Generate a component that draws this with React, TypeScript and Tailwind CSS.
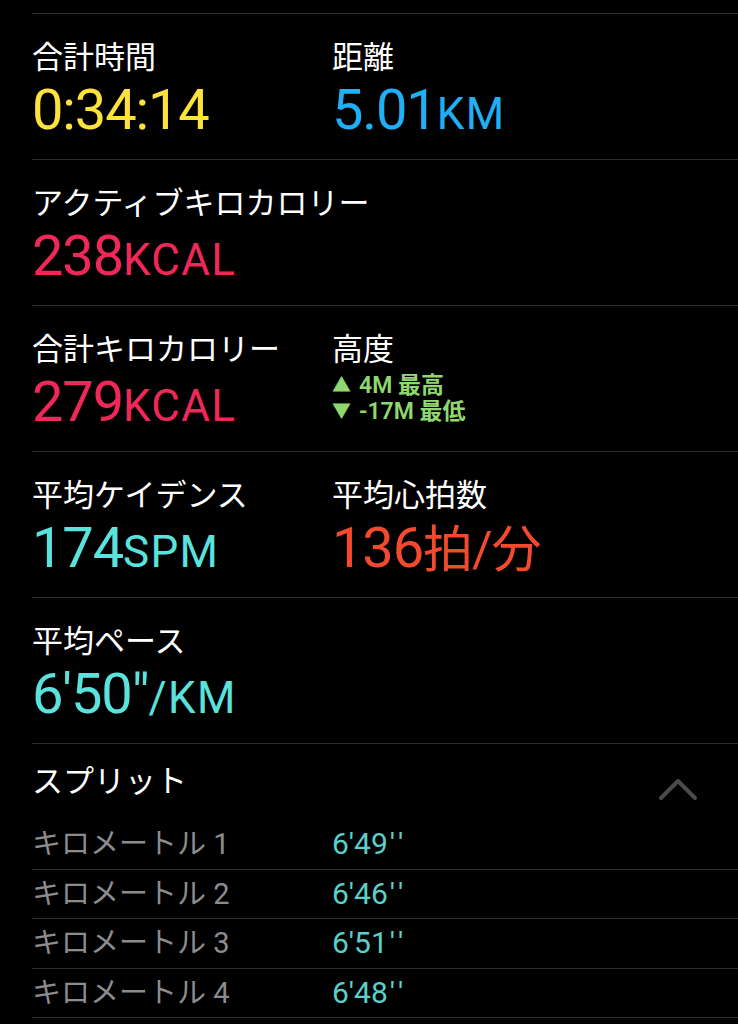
import { ReactNode } from "react"

const FONT = "font-['Roboto','Noto_Sans_CJK_JP',sans-serif]"

type StatProps = {
  label: string
  children: ReactNode
}
const Stat = (props: StatProps) => {
  return (
    <div className="flex flex-col">
      <p className="text-[31px] leading-[36px] text-white">{props.label}</p>
      <div className="mt-[6px]">{props.children}</div>
    </div>
  )
}

type ValueProps = {
  value: string
  unit?: string
  color: string
  unitSize?: string
}
const Value = (props: ValueProps) => {
  return (
    <p className={`flex items-baseline text-[56px] leading-[56px] tracking-[-0.02em] ${props.color}`}>
      <span>{props.value}</span>
      {props.unit && <span className={`${props.unitSize ?? "text-[44px] tracking-[0.03em]"}`}>{props.unit}</span>}
    </p>
  )
}

const Row = (props: { children: ReactNode }) => {
  return (
    <div className="flex h-[146px] border-t border-[#2e2e30] pt-[26px]">{props.children}</div>
  )
}

const splits = [
  { km: 1, pace: "6'49" },
  { km: 2, pace: "6'46" },
  { km: 3, pace: "6'51" },
  { km: 4, pace: "6'48" },
]

export default function App() {
  return (
    <div className={`w-[738px] h-[1024px] overflow-hidden bg-black pt-[13px] pl-[32px] ${FONT}`}>
      <Row>
        <div className="w-[300px]">
          <Stat label="合計時間">
            <Value value="0:34:14" color="text-[#fde23c]" />
          </Stat>
        </div>
        <Stat label="距離">
          <Value value="5.01" unit="KM" color="text-[#1eaff4]" />
        </Stat>
      </Row>
      <Row>
        <Stat label="アクティブキロカロリー">
          <Value value="238" unit="KCAL" color="text-[#f0285a]" />
        </Stat>
      </Row>
      <Row>
        <div className="w-[300px]">
          <Stat label="合計キロカロリー">
            <Value value="279" unit="KCAL" color="text-[#f0285a]" />
          </Stat>
        </div>
        <div className="flex flex-col">
          <p className="text-[31px] leading-[36px] text-white">高度</p>
          <div className="mt-[5px] flex flex-col text-[23px] leading-[26px] font-semibold text-[#8fd870]">
            <p className="flex items-center gap-[8px]"><span className="text-[19px]">▲</span><span>4M 最高</span></p>
            <p className="flex items-center gap-[8px]"><span className="text-[19px]">▼</span><span>-17M 最低</span></p>
          </div>
        </div>
      </Row>
      <Row>
        <div className="w-[300px]">
          <Stat label="平均ケイデンス">
            <Value value="174" unit="SPM" color="text-[#5ae2dc]" />
          </Stat>
        </div>
        <Stat label="平均心拍数">
          <Value value="136" unit="拍/分" unitSize="text-[50px]" color="text-[#f34a2e]" />
        </Stat>
      </Row>
      <Row>
        <Stat label={"平均ペース"}>
          <Value value={"6'50\""} unit="/KM" color="text-[#5ae2dc]" />
        </Stat>
      </Row>
      <div className="border-t border-[#2e2e30]">
        <div className="flex h-[76px] items-center justify-between pr-[40px]">
          <p className="text-[31px] leading-[36px] text-white">スプリット</p>
          <svg width="40" height="24" viewBox="0 0 40 24" className="mt-[14px]">
            <polyline points="3,21 20,4 37,21" fill="none" stroke="#4b4b4d" strokeWidth="4" strokeLinecap="round" strokeLinejoin="round" />
          </svg>
        </div>
        {splits.map((split) => (
          <div key={split.km} className="flex h-[49.5px] items-center border-b border-[#2e2e30] text-[29px] leading-[32px]">
            <span className="w-[300px] text-[#8c8c8e]">キロメートル {split.km}</span>
            <span className="text-[30px] text-[#5ccfca]">
              {split.pace}
              <span className="tracking-[0.15em] ml-[2px]">''</span>
            </span>
          </div>
        ))}
      </div>
    </div>
  )
}
